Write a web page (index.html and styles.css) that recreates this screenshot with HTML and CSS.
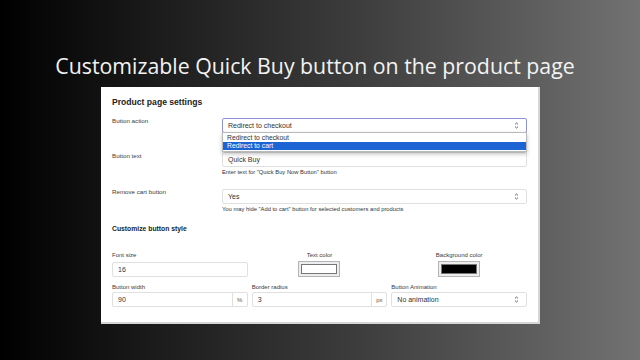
FILE: index.html
```html
<!DOCTYPE html>
<html lang="en">
<head>
    <meta charset="UTF-8">
    <meta name="viewport" content="width=device-width, initial-scale=1">
    <title>Quick Buy button settings</title>
    <link rel="stylesheet" href="styles.css">
</head>
<body>
    <h1 class="headline">Customizable Quick Buy button on the product page</h1>

    <div class="settings-card">
        <h2>Product page settings</h2>

        <div class="form-row first">
            <div class="row-label">Button action</div>
            <div class="row-field">
                <div class="select focused">
                    <span>Redirect to checkout</span>
                    <svg class="arrows" width="5" height="7" viewBox="0 0 5 7"><path d="M1 2.4 L2.5 1 L4 2.4 M1 4.6 L2.5 6 L4 4.6" fill="none" stroke="#555" stroke-width="0.9"/></svg>
                </div>
                <ul class="dropdown">
                    <li>Redirect to checkout</li>
                    <li class="active">Redirect to cart</li>
                </ul>
            </div>
        </div>

        <div class="form-row second">
            <div class="row-label">Button text</div>
            <div class="row-field">
                <div class="input">Quick Buy</div>
                <p class="help">Enter text for "Quick Buy Now Button" button</p>
            </div>
        </div>

        <div class="form-row third">
            <div class="row-label">Remove cart button</div>
            <div class="row-field">
                <div class="select">
                    <span>Yes</span>
                    <svg class="arrows" width="5" height="7" viewBox="0 0 5 7"><path d="M1 2.4 L2.5 1 L4 2.4 M1 4.6 L2.5 6 L4 4.6" fill="none" stroke="#555" stroke-width="0.9"/></svg>
                </div>
                <p class="help">You may hide "Add to cart" button for selected customers and products</p>
            </div>
        </div>

        <h3>Customize button style</h3>

        <div class="style-grid top">
            <div class="col">
                <label>Font size</label>
                <div class="input">16</div>
            </div>
            <div class="col center">
                <label>Text color</label>
                <div class="swatch"><div class="swatch-color white"></div></div>
            </div>
            <div class="col center">
                <label>Background color</label>
                <div class="swatch"><div class="swatch-color black"></div></div>
            </div>
        </div>

        <div class="style-grid bottom">
            <div class="col">
                <label>Button width</label>
                <div class="input group"><span class="value">90</span><span class="addon">%</span></div>
            </div>
            <div class="col">
                <label>Border radius</label>
                <div class="input group"><span class="value">3</span><span class="addon">px</span></div>
            </div>
            <div class="col">
                <label>Button Animation</label>
                <div class="select">
                    <span>No animation</span>
                    <svg class="arrows" width="5" height="7" viewBox="0 0 5 7"><path d="M1 2.4 L2.5 1 L4 2.4 M1 4.6 L2.5 6 L4 4.6" fill="none" stroke="#555" stroke-width="0.9"/></svg>
                </div>
            </div>
        </div>
    </div>
</body>
</html>
```

FILE: styles.css
```css
body {
    margin: 0;
    width: 640px;
    height: 360px;
    overflow: hidden;
    background: linear-gradient(90deg, #000 0%, #1c1c1c 25%, #3c3c3c 55%, #727272 100%);
    font-family: "Liberation Sans", Arial, sans-serif;
    color: #333;
}
.headline {
    margin: 0;
    padding: 53px 10px 0 0;
    height: 26px;
    line-height: 26px;
    text-align: center;
    font-family: "Open Sans", sans-serif;
    font-weight: 400;
    font-size: 21.3px;
    color: #f3f3f3;
}
.settings-card {
    box-sizing: border-box;
    margin: 8px 0 0 101px;
    width: 439px;
    height: 237px;
    background: #fff;
    border: 1px solid #d6d6d6;
    border-width: 0 2px 2px 0;
    padding: 9px 11px 0 11px;
}
.settings-card h2 {
    margin: 0;
    font-size: 8.6px;
    line-height: 12px;
    font-weight: bold;
    color: #222;
}
.settings-card h3 {
    margin: 11px 0 0;
    font-size: 6.8px;
    line-height: 10px;
    font-weight: bold;
    color: #222;
}
.form-row {
    display: grid;
    grid-template-columns: 110px 1fr;
}
.form-row.first { margin-top: 10px; }
.form-row.second { margin-top: 19px; }
.form-row.third { margin-top: 13px; }
.row-label {
    font-size: 6.2px;
    line-height: 6px;
    padding-top: 0;
    color: #3a3a3a;
}
.form-row.second .row-label { padding-top: 1px; }
.row-field {
    position: relative;
}
.select, .input {
    box-sizing: border-box;
    height: 15px;
    border: 1px solid #e0e0e0;
    border-radius: 2px;
    background: #fff;
    display: flex;
    align-items: center;
    justify-content: space-between;
    padding: 0 7px 0 5px;
    font-size: 7px;
    color: #333;
}
.select.focused {
    border-color: #8e92d8;
}
.arrows {
    display: block;
}
.dropdown {
    position: absolute;
    top: 14px;
    left: 0;
    right: 0;
    margin: 0;
    padding: 1px 0 1px;
    list-style: none;
    background: #fff;
    border: 1px solid #b9b9b9;
    box-shadow: 0 2px 4px rgba(0, 0, 0, 0.25);
    font-size: 6.8px;
    z-index: 2;
}
.dropdown li {
    height: 8px;
    line-height: 8px;
    padding-left: 4px;
    color: #333;
}
.dropdown li.active {
    background: #1c63d3;
    color: #fff;
}
.help {
    margin: 1px 0 0;
    font-size: 5.8px;
    line-height: 8px;
    color: #333;
}
.style-grid {
    display: grid;
    grid-template-columns: 1fr 1fr 1fr;
    column-gap: 4px;
}
.style-grid.top { margin-top: 17px; }
.style-grid.bottom { margin-top: 6px; }
.col {
    display: flex;
    flex-direction: column;
}
.col.center {
    align-items: center;
}
.col label {
    font-size: 6px;
    line-height: 8px;
    color: #3a3a3a;
}
.style-grid.top .col label { margin-bottom: 3px; }
.style-grid.top .col.center label { margin-bottom: 2px; }
.style-grid.bottom .col label { margin-bottom: 1px; }
.input.group {
    padding: 0;
}
.input.group .value {
    padding-left: 5px;
}
.input.group .addon {
    box-sizing: border-box;
    height: 100%;
    min-width: 15px;
    padding: 0 3px;
    border-left: 1px solid #e0e0e0;
    display: flex;
    align-items: center;
    justify-content: center;
    font-size: 6px;
    color: #555;
}
.swatch {
    box-sizing: border-box;
    width: 42px;
    height: 16px;
    border: 1px solid #b4b4b4;
    background: #ededed;
    padding: 2px;
}
.swatch-color {
    box-sizing: border-box;
    height: 100%;
    border: 1px solid #777;
}
.swatch-color.white { background: #fff; }
.swatch-color.black { background: #000; }
```
